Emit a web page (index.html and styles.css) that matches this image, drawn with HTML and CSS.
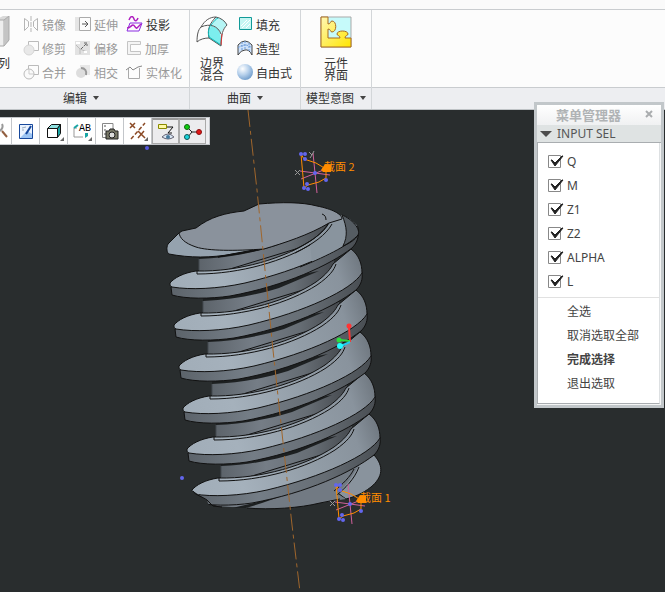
FILE: index.html
```html
<!DOCTYPE html>
<html lang="zh-CN">
<head>
    <meta charset="UTF-8">
    <meta name="viewport" content="width=device-width, initial-scale=1.0">
    <title>菜单管理器</title>
    <link rel="stylesheet" href="styles.css">
</head>
<body>
    <header class="ribbon">
        <div class="ribbon-tabs"></div>
        <div class="ribbon-groups">
            <section class="group group-edit">
                <div class="group-body">
                    <button class="big-button cut">
                        <svg width="13" height="32" viewBox="0 0 13 32">
                            <path d="M0 3L6 0H12V25L6 30H0Z" fill="#d9d9d9"/>
                            <path d="M0 4H7V30H0Z" fill="#eee" stroke="#aaa"/>
                            <path d="M7 4L12 0V24L7 30" fill="#c4c4c4" stroke="#aaa"/>
                            <path d="M0 11H3M0 15H3M0 22H3" stroke="#888" stroke-width="2"/>
                        </svg>
                        <span>列</span>
                    </button>
                    <div class="commands">
                        <button class="command" disabled>
                            <svg width="16" height="16" viewBox="0 0 16 16" fill="none" stroke="#b5b5b5"><path d="M1.500 2.500V14.500L5.500 10.500V5.500ZM14.500 2.500V14.500L10.500 10.500V5.500Z"/><path d="M8 0V16" stroke-dasharray="5 1"/></svg>
                            镜像
                        </button>
                        <button class="command" disabled>
                            <svg width="16" height="16" viewBox="0 0 16 16" fill="none"><path d="M0 1H4V15H0Z" fill="#e5e5e5"/><path d="M4.500 1.500H15.500V14.500H4.500Z" stroke="#aaa"/><path d="M7 8H13M10 5L13 8L10 11" stroke="#555"/></svg>
                            延伸
                        </button>
                        <button class="command">
                            <svg width="17" height="16" viewBox="0 0 17 16" fill="none"><path d="M3 4C5-1 7 0 8 3C9 6 11 5 12 2" stroke="#b01fc0" stroke-width="1.500"/><path d="M4 7H16L13 15H1Z" stroke="#8a2be2"/><path d="M1 12C5 12 5 9 7 9C9 9 9 13 11 12L15 8" stroke="#b01fc0" stroke-width="1.500"/></svg>
                            投影
                        </button>
                        <button class="command" disabled>
                            <svg width="16" height="16" viewBox="0 0 16 16"><path d="M5.500 1.500H15.500V10.500H5.500Z" fill="none" stroke="#bbb"/><circle cx="6" cy="10" r="5" fill="#e8e8e8" stroke="#d5d5d5"/></svg>
                            修剪
                        </button>
                        <button class="command" disabled>
                            <svg width="16" height="16" viewBox="0 0 16 16"><path d="M0 1H15V15H0Z" fill="#e2e2e2"/><path d="M1 5L5 9L5 14M5 9L12 12" fill="none" stroke="#bbb"/><path d="M6 9L12 3M9 3H12V6" fill="none" stroke="#666" stroke-dasharray="3 1"/><path d="M1 2H5V4H1ZM9 11H12V13H9Z" fill="#fff"/></svg>
                            偏移
                        </button>
                        <button class="command" disabled>
                            <svg width="16" height="16" viewBox="0 0 16 16" fill="none"><path d="M14.500 1.500H1.500V14.500H14.500V11.500H4.500V4.500H14.500Z" fill="#f4f4f4" stroke="#c4c4c4"/></svg>
                            加厚
                        </button>
                        <button class="command" disabled>
                            <svg width="16" height="16" viewBox="0 0 16 16"><path d="M5.500 1.500H15.500V10.500H5.500Z" fill="none" stroke="#bbb"/><circle cx="6" cy="10" r="5" fill="#fafafa" stroke="#bbb"/><path d="M6 5V10H11" fill="none" stroke="#ccc"/></svg>
                            合并
                        </button>
                        <button class="command" disabled>
                            <svg width="16" height="16" viewBox="0 0 16 16"><path d="M5 1H15V11H5Z" fill="#e8e8e8"/><circle cx="6" cy="9" r="5" fill="#ddd"/><path d="M6 4C10 4 12 7 11 11" fill="none" stroke="#999" stroke-width="2"/></svg>
                            相交
                        </button>
                        <button class="command" disabled>
                            <svg width="17" height="16" viewBox="0 0 17 16" fill="none" stroke="#aaa"><path d="M2.500 4V14.500H13.500V4"/><path d="M0 6L4 3L7 6L12 3L16 2" stroke="#888"/></svg>
                            实体化
                        </button>
                    </div>
                </div>
                <button class="group-title">编辑 <i class="caret"></i></button>
            </section>

            <section class="group group-surface">
                <div class="group-body">
                    <button class="big-button">
                        <svg width="34" height="32" viewBox="0 0 34 32">
                            <path d="M5 11C10 3 16 0 21 1L16 10C10 9 6 13 3 17Z" fill="#fff"/>
                            <path d="M16 10C23 10 27 16 26 30L14 22C13 17 14 13 16 10Z" fill="#7ceeee"/>
                            <path d="M21 1C26 2 31 5 32 9C29 12 27 14 26 18C24 13 20 10 16 10Z" fill="#b5f5f5"/>
                            <path d="M2 26C2 19 3 14 6 11C10 4 15 1 21 1C26 2 30 5 32 9C28 13 26 18 26 30L14 22C10 22 5 23 2 26ZM6 11C15 7 23 10 26 18M21 1C15 7 12 13 14 22" fill="none" stroke="#555"/>
                            <path d="M16 9C13 13 13 17 14 21L26 29M16 9C19 5 21 3 23 2" fill="none" stroke="#10b9b9"/>
                            <path d="M26 29L27 18" stroke="#d33"/>
                        </svg>
                        <span>边界<br>混合</span>
                    </button>
                    <div class="commands">
                        <button class="command">
                            <svg width="16" height="16" viewBox="0 0 16 16"><path d="M2.500 1.500H14.500V13.500H2.500Z" fill="#c5f6f3" stroke="#129a98"/><path d="M4 10L10 4M5 12L13 4M9 12L13 8" stroke="#fff"/></svg>
                            填充
                        </button>
                        <button class="command">
                            <svg width="16" height="16" viewBox="0 0 16 16"><path d="M1 5Q8-3 15 5V15Q12 9 8 10Q4 10 1 15Z" fill="#cfe2fa" stroke="#444"/><path d="M5 2V10M8 1V10M12 3V11M1 8Q8 2 15 8" fill="none" stroke="#6898d8" stroke-dasharray="2 1"/></svg>
                            造型
                        </button>
                        <button class="command">
                            <svg width="16" height="16" viewBox="0 0 16 16"><defs><radialGradient id="ball" cx=".35" cy=".3" r=".75"><stop offset="0" stop-color="#fff"/><stop offset=".5" stop-color="#b9d2ec"/><stop offset="1" stop-color="#6f9ccb"/></radialGradient></defs><circle cx="8" cy="8" r="8" fill="url(#ball)"/></svg>
                            自由式
                        </button>
                    </div>
                </div>
                <button class="group-title">曲面 <i class="caret"></i></button>
            </section>

            <section class="group group-intent">
                <div class="group-body">
                    <button class="big-button">
                        <svg width="32" height="32" viewBox="0 0 32 32">
                            <defs><linearGradient id="piece" x1="0" y1="0" x2="1" y2="1"><stop offset="0" stop-color="#fff7b5"/><stop offset="1" stop-color="#ffe600"/></linearGradient></defs>
                            <path d="M1 1H31V31H1Z" fill="#c6fafa" stroke="#a9a9a9"/>
                            <path d="M1 1H8V8C11 8 10 5 12 5C17 5 17 16 12 16C10 16 11 13 8 13V22H20C20 19 17 20 17 18C17 14 28 14 28 18C28 20 25 19 25 22H31V31H1Z" fill="url(#piece)" stroke="#a86a20"/>
                        </svg>
                        <span>元件<br>界面</span>
                    </button>
                </div>
                <button class="group-title">模型意图 <i class="caret"></i></button>
            </section>

            <section class="group group-rest">
                <div class="group-body"></div>
                <div class="group-title"></div>
            </section>
        </div>
    </header>

    <main class="viewport">
        <svg class="model" width="665" height="482" viewBox="0 110 665 482">
            <defs>
                <linearGradient id="flank" gradientUnits="userSpaceOnUse" x1="170" y1="290" x2="364" y2="225">
                    <stop offset="0" stop-color="#a1adb8"/>
                    <stop offset=".25" stop-color="#a5b1bc"/>
                    <stop offset=".6" stop-color="#929da7"/>
                    <stop offset=".85" stop-color="#89939d"/>
                    <stop offset="1" stop-color="#6b737b"/>
                </linearGradient>
                <linearGradient id="rim" gradientUnits="userSpaceOnUse" x1="170" y1="0" x2="360" y2="0">
                    <stop offset="0" stop-color="#5c636a"/>
                    <stop offset=".35" stop-color="#747d86"/>
                    <stop offset=".7" stop-color="#666d74"/>
                    <stop offset="1" stop-color="#484d52"/>
                </linearGradient>
                <linearGradient id="core" gradientUnits="userSpaceOnUse" x1="198" y1="0" x2="330" y2="0">
                    <stop offset="0" stop-color="#5c636a"/>
                    <stop offset=".35" stop-color="#757d86"/>
                    <stop offset=".7" stop-color="#666d74"/>
                    <stop offset="1" stop-color="#45494e"/>
                </linearGradient>
                <clipPath id="upper-end">
                    <path d="M150 240H290L322 223L342 215L350 219L359 227L370 240V310H150Z"/>
                </clipPath>
                <clipPath id="lower-end">
                    <path d="M150 400H400V520H213L207 500L193 491H150Z"/>
                </clipPath>
                <!-- one turn of the thread with the core above it -->
                <g id="turn" stroke-linejoin="round">
                    <path d="M199 250V274L260 268L330 235V200Z" fill="url(#core)"/>
                    <path d="M199 250V259C230 258 255 252 275 246L315 229Z" fill="#1d2021"/>
                    <path d="M171 287L172 295C185 299 210 299 230 296C285 286 330 265 352 248C357 243 359 237 358 230Z" fill="url(#rim)" stroke="#111"/>
                    <path d="M170 283C174 278 183 273 196 271C240 272 285 258 312 240C323 232 327 226 329 222L347 207C355 213 358 222 358 231C348 248 300 270 245 283C218 289 190 290 172 287C170 286 170 285 170 283Z" fill="url(#flank)" stroke="#111"/>
                    <path d="M199 259V270" stroke="#444a50"/>
                    <path d="M197 271V274C240 274 285 261 313 243C326 234 330 228 332 222" fill="none" stroke="#111"/>
                </g>
            </defs>

            <!-- lower end of the body -->
            <path d="M374 455C384 466 383 477 371 487C362 494 354 497 346 499L320 480Z" fill="#89939d" stroke="#111"/>
            <path d="M215 506L247 508C270 510 300 508 320 503L346 499L338 494L349 481L360 464L250 490Z" fill="#727a83"/>
            <path d="M247 508C270 510 300 508 320 503L340 499" fill="none" stroke="#111"/>
            <path d="M359 467C354 480 345 488 337 495M354 469C350 477 343 484 334 491" fill="none" stroke="#111"/>
            <path d="M232 508L262 501L285 495L262 503L246 508Z" fill="#1d2021"/>
            <g clip-path="url(#lower-end)">
                <use href="#turn" x="22" y="207"/>
            </g>
            <path d="M193 491C195 495 203 497 207 500L213 506L222 507" fill="none" stroke="#111"/>
            <use href="#turn" x="17" y="166"/>
            <use href="#turn" x="13" y="125"/>
            <use href="#turn" x="9" y="83"/>
            <use href="#turn" x="4" y="42"/>
            <g clip-path="url(#upper-end)">
                <use href="#turn"/>
            </g>
            <!-- start of the thread and top face -->
            <path d="M342 215C352 219 361 229 358 235C355 240 350 243 343 246Z" fill="#555c62" stroke="#111"/>
            <path d="M342 215L329 223C326 230 320 236 310 243L312 262C326 257 336 251 343 246C349 237 346 224 342 215Z" fill="#89949e"/>
            <path d="M342 215C347 227 348 236 343 246M358 235C350 244 330 255 300 267M332 224C326 235 313 244 295 253M329 223C323 234 310 242 292 251" fill="none" stroke="#111"/>
            <path d="M179 233L168 244C166 248 167 253 169 254C190 258 210 258 233 254L264 249L250 234Z" fill="#95a2ae" stroke="#111"/>
            <path d="M218 257C245 253 260 250 272 246L264 248L232 254Z" fill="#22272a" stroke="#111"/>
            <path d="M179 233L182 231L196 228C210 217 225 213 244 211L259 204C282 202 302 202 317 206C332 209 342 214 342 219L329 223C309 235 284 243 264 249C235 251 208 251 196 247C184 243 180 238 179 233Z" fill="#8a929c" stroke="#111"/>
            <path d="M322 214C325 215 326 217 326 220" fill="none" stroke="#111"/>

            <path d="M248 110L257 190L273 350L292 525L300 592" fill="none" stroke="#a0662c" stroke-dasharray="17 4 4 4"/>

            <!-- spin centre -->
            <g stroke-width="2">
                <path d="M350 342L349 327" stroke="#f33"/>
                <path d="M350 341L340 340" stroke="#2edc3d"/>
                <path d="M350 342L341 346" stroke="#2ce"/>
            </g>
            <circle cx="349" cy="326" r="2.500" fill="#f33"/>
            <circle cx="339" cy="340" r="2.500" fill="#2edc3d"/>
            <circle cx="340" cy="346" r="3" fill="#2ff"/>

            <!-- section sketch -->
            <defs>
                <g id="section">
                    <path d="M313 153L317 193M300 171L330 175M301 179L326 169" stroke="#d0609a" fill="none"/>
                    <path d="M301 154L304 188L308 185L319 182L326 178V169L316 163L304 159Z" fill="none" stroke="#ff8c00"/>
                    <path d="M321 170L325 164L331 165V172L323 172Z" fill="#ff8c00"/>
                    <path d="M295 170L300 175M300 170L295 175" stroke="#999"/>
                    <g fill="#6366ee"><circle cx="301" cy="154" r="2"/><circle cx="305" cy="154" r="2"/><circle cx="305" cy="159" r="2"/><circle cx="315" cy="173" r="2"/><circle cx="326" cy="180" r="2"/><circle cx="307" cy="184" r="2"/><circle cx="304" cy="188" r="2"/><circle cx="308" cy="189" r="2"/></g>
                </g>
            </defs>
            <use href="#section"/>
            <path d="M309 152L312 155L314 151M312 155L310 158" stroke="#999" fill="none"/>
            <use href="#section" x="35" y="331"/>
            <text class="section-label" x="324" y="171">截面 2</text>
            <text class="section-label" x="360" y="502">截面 1</text>
            <circle cx="147" cy="148" r="2" fill="#5558dd"/>
            <circle cx="182" cy="478" r="2" fill="#6366ee"/>
        </svg>

        <div class="toolbar">
            <button class="tool tool-cut" aria-label="缩放">
                <svg width="12" height="24" viewBox="0 0 12 24" fill="none"><path d="M-4 12A5 5 0 0 0 2 5" stroke="#999" stroke-width="2"/><path d="M2 12L7 18" stroke="#925f40" stroke-width="2"/></svg>
            </button>
            <button class="tool" aria-label="重画">
                <svg width="16" height="18" viewBox="0 0 16 18"><path d="M1.500 2.500H14.500V16.500H1.500Z" fill="#eaf3ff" stroke="#17489c"/><path d="M2 16L9 9L14 12V16Z" fill="#9cc4f3"/><path d="M8 12L13 4" stroke="#17489c" stroke-width="2"/><path d="M4 6L8 5M4 8H6" stroke="#9ab"/></svg>
            </button>
            <button class="tool more" aria-label="显示样式">
                <svg width="16" height="16" viewBox="0 0 16 16" stroke="#111"><path d="M1.500 5.500L5.500 1.500H14.500L11.500 5.500Z" fill="#8fe0e0"/><path d="M11.500 5.500L14.500 1.500V10.500L11.500 14.500Z" fill="#19a5a5"/><path d="M1.500 5.500H11.500V14.500H1.500Z" fill="#fff"/></svg>
            </button>
            <button class="tool more" aria-label="已命名视图">
                <svg width="18" height="18" viewBox="0 0 18 18"><path d="M4 6H1V15H10" fill="none" stroke="#999"/><path d="M1 6L5 3" stroke="#19a5a5" stroke-width="2"/><path d="M12 11H15V14L12 16Z" fill="#19a5a5"/><text class="tool-letters" x="6" y="9">AB</text></svg>
            </button>
            <button class="tool" aria-label="视图管理器">
                <svg width="18" height="18" viewBox="0 0 18 18"><path d="M12 8V1.500H1.500V15.500H5" fill="#fff" stroke="#888"/><path d="M3 4H5M3 8H5M3 12H5" stroke="#555"/><path d="M5 9H8L9 7H13L14 9H17V17H5Z" fill="#776" stroke="#222"/><circle cx="11" cy="13" r="3" fill="#ddd" stroke="#222"/></svg>
            </button>
            <button class="tool more" aria-label="基准显示">
                <svg width="18" height="18" viewBox="0 0 18 18" stroke="#8b4a26" stroke-width="1.500"><path d="M1 1L6 6M6 1L1 6"/><path d="M2 17L16 1" stroke-dasharray="4 2"/><path d="M9 9L16 16M15 9L9 16"/></svg>
            </button>
            <button class="tool pressed" aria-label="注释显示">
                <svg width="20" height="20" viewBox="0 0 20 20"><path d="M2.500 2.500H10.500V6.500H2.500Z" fill="#fff9a5" stroke="#8a8a00"/><path d="M11 5H17L12 11H16" fill="none" stroke="#111"/><path d="M6 15Q12 9 18 15Q12 19 6 15Z" fill="#dce9f5" stroke="#667"/><circle cx="12" cy="15" r="2" fill="#47799c"/></svg>
            </button>
            <button class="tool pressed" aria-label="旋转中心">
                <svg width="20" height="20" viewBox="0 0 20 20"><path d="M4 5L9 10L4 16M9 10H16" fill="none" stroke="#222"/><circle cx="4" cy="5" r="2.500" fill="#10d010" stroke="#161"/><circle cx="4" cy="15" r="2.500" fill="#19d5dd" stroke="#155"/><circle cx="16" cy="10" r="2.500" fill="#e51616" stroke="#811"/></svg>
            </button>
        </div>
    </main>

    <aside class="menu-manager">
        <div class="menu-title">
            <span>菜单管理器</span>
            <button class="close" aria-label="关闭"><svg width="8" height="8" viewBox="0 0 8 8"><path d="M1 1L7 7M7 1L1 7" stroke="#aaadaf" stroke-width="2"/></svg></button>
        </div>
        <button class="menu-header"><i class="triangle"></i>INPUT SEL</button>
        <div class="menu-body">
            <div class="options">
                <label><input type="checkbox" checked>Q</label>
                <label><input type="checkbox" checked>M</label>
                <label><input type="checkbox" checked>Z1</label>
                <label><input type="checkbox" checked>Z2</label>
                <label><input type="checkbox" checked>ALPHA</label>
                <label><input type="checkbox" checked>L</label>
            </div>
            <div class="actions">
                <button>全选</button>
                <button>取消选取全部</button>
                <button class="default">完成选择</button>
                <button>退出选取</button>
            </div>
        </div>
    </aside>
</body>
</html>
```

FILE: styles.css
```css
* {
    box-sizing: border-box;
}
body {
    margin: 0;
    height: 100vh;
    display: flex;
    flex-direction: column;
    position: relative;
    overflow: hidden;
    background: #292d2e;
    font-family: "Noto Sans", "Noto Sans CJK SC", sans-serif;
    font-size: 12px;
    color: #333;
}
button {
    margin: 0;
    padding: 0;
    border: none;
    background: none;
    font: inherit;
    color: inherit;
}
svg {
    display: block;
    flex: none;
}

/* ribbon */
.ribbon {
    background: #fcfcfc;
    font-family: "Noto Sans CJK SC", sans-serif;
    border-bottom: 1px solid #bfc3c6;
}
.ribbon-tabs {
    height: 10px;
    background: #fafafa;
    border-bottom: 1px solid #c9cccf;
}
.ribbon-groups {
    display: flex;
}
.group {
    display: flex;
    flex-direction: column;
    border-right: 1px solid #d3d6d9;
}
.group-edit {
    width: 190px;
}
.group-surface {
    width: 111px;
}
.group-intent {
    width: 71px;
}
.group-rest {
    flex: 1;
    border-right: none;
}
.group-body {
    display: flex;
    height: 77px;
    padding-top: 2px;
}
.group-title {
    height: 22px;
    display: flex;
    align-items: center;
    justify-content: center;
    gap: 6px;
    padding-bottom: 2px;
    background: #edeef1;
    border-top: 1px solid #c9cccf;
    white-space: nowrap;
}
.group-edit .group-title {
    padding-right: 27px;
}
.caret {
    border: 3px solid transparent;
    border-top: 4px solid #444;
    border-bottom: none;
}
.commands {
    display: grid;
    grid-template-rows: repeat(3, 24px);
    align-content: start;
}
.group-edit .commands {
    grid-template-columns: 52px 51px auto;
    margin-left: 10px;
}
.group-surface .commands {
    margin-left: 3px;
}
.command {
    display: flex;
    align-items: center;
    gap: 3px;
    white-space: nowrap;
}
.command:disabled {
    color: #999;
}
.big-button {
    display: flex;
    flex-direction: column;
    align-items: center;
    gap: 9px;
    padding-top: 4px;
    line-height: 12px;
}
.group-surface .big-button {
    width: 44px;
}
.group-intent .big-button {
    width: 100%;
}
.big-button.cut {
    width: 13px;
    align-items: flex-end;
    padding-right: 3px;
}

/* graphics window */
.viewport {
    flex: 1;
    position: relative;
    overflow: hidden;
}
.section-label {
    font-family: "Noto Sans CJK SC", sans-serif;
    font-size: 11px;
    fill: #ff8c00;
}
.toolbar {
    position: absolute;
    top: 7px;
    left: 0;
    display: flex;
    height: 28px;
    padding-right: 3px;
    background: #edeef1;
    border: 1px solid #c3c6ca;
    border-left: none;
}
.tool {
    width: 28px;
    display: flex;
    align-items: center;
    justify-content: center;
    position: relative;
    background: #fff;
    border-right: 1px solid #c3c6ca;
}
.tool-cut {
    width: 12px;
}
.tool.more::after {
    content: "";
    position: absolute;
    right: 3px;
    bottom: 3px;
    border-left: 4px solid transparent;
    border-bottom: 4px solid #666;
}
.tool.pressed {
    width: 27px;
    background: #ececee;
    border: 1px solid #aaa;
    border-top: 2px solid #999;
}
.tool-letters {
    font-family: "Liberation Mono", monospace;
    font-size: 10px;
}

/* menu manager */
.menu-manager {
    position: absolute;
    top: 102px;
    right: 1px;
    width: 130px;
    padding-bottom: 1px;
    background: #f4f5f5;
    border: 3px solid #c2c7ca;
}
.menu-title {
    height: 20px;
    display: flex;
    align-items: center;
    justify-content: space-between;
    padding: 0 8px 2px 19px;
    background: linear-gradient(#fff, #f0f1f2);
    color: #b0b3b5;
    font-family: "Noto Sans CJK SC", sans-serif;
    font-size: 13px;
    font-weight: bold;
}
.menu-header {
    width: 100%;
    height: 18px;
    display: flex;
    align-items: center;
    gap: 5px;
    padding-left: 3px;
    background: #dfe3e3;
    border-bottom: 1px solid #a9adb0;
    color: #555;
}
.triangle {
    border: 6px solid transparent;
    border-top: 6px solid #4d4d4d;
    border-bottom: none;
}
.menu-body {
    background: #fff;
    border: 1px solid #a9adb0;
    border-top: none;
    border-right-color: #dde0e2;
    margin-right: 1px;
}
.options {
    padding: 6px 0 4px 9px;
    border-bottom: 1px solid #e1e1e1;
}
.options label {
    height: 24px;
    display: flex;
    align-items: center;
    gap: 3px;
    color: #444;
}
.options input {
    appearance: none;
    width: 17px;
    height: 16px;
    margin: 0;
    background: url("data:image/svg+xml,%3Csvg xmlns='http://www.w3.org/2000/svg' width='17' height='16'%3E%3Cpath d='M1.500 2.500H13.500V14.500H1.500Z' fill='%23fff' stroke='%23888'/%3E%3C/svg%3E");
}
.options input:checked {
    background: url("data:image/svg+xml,%3Csvg xmlns='http://www.w3.org/2000/svg' width='17' height='16'%3E%3Cpath d='M1.500 2.500H13.500V14.500H1.500Z' fill='%23fff' stroke='%23888'/%3E%3Cpath d='M4 7L5 7L8 10L15 3L16 3L8 13Z' fill='%23222' stroke='%23222'/%3E%3C/svg%3E");
}
.actions {
    display: flex;
    flex-direction: column;
    padding: 1px 0 8px 29px;
}
.actions button {
    height: 24px;
    text-align: left;
    color: #444;
}
.actions .default {
    font-weight: bold;
}
```
